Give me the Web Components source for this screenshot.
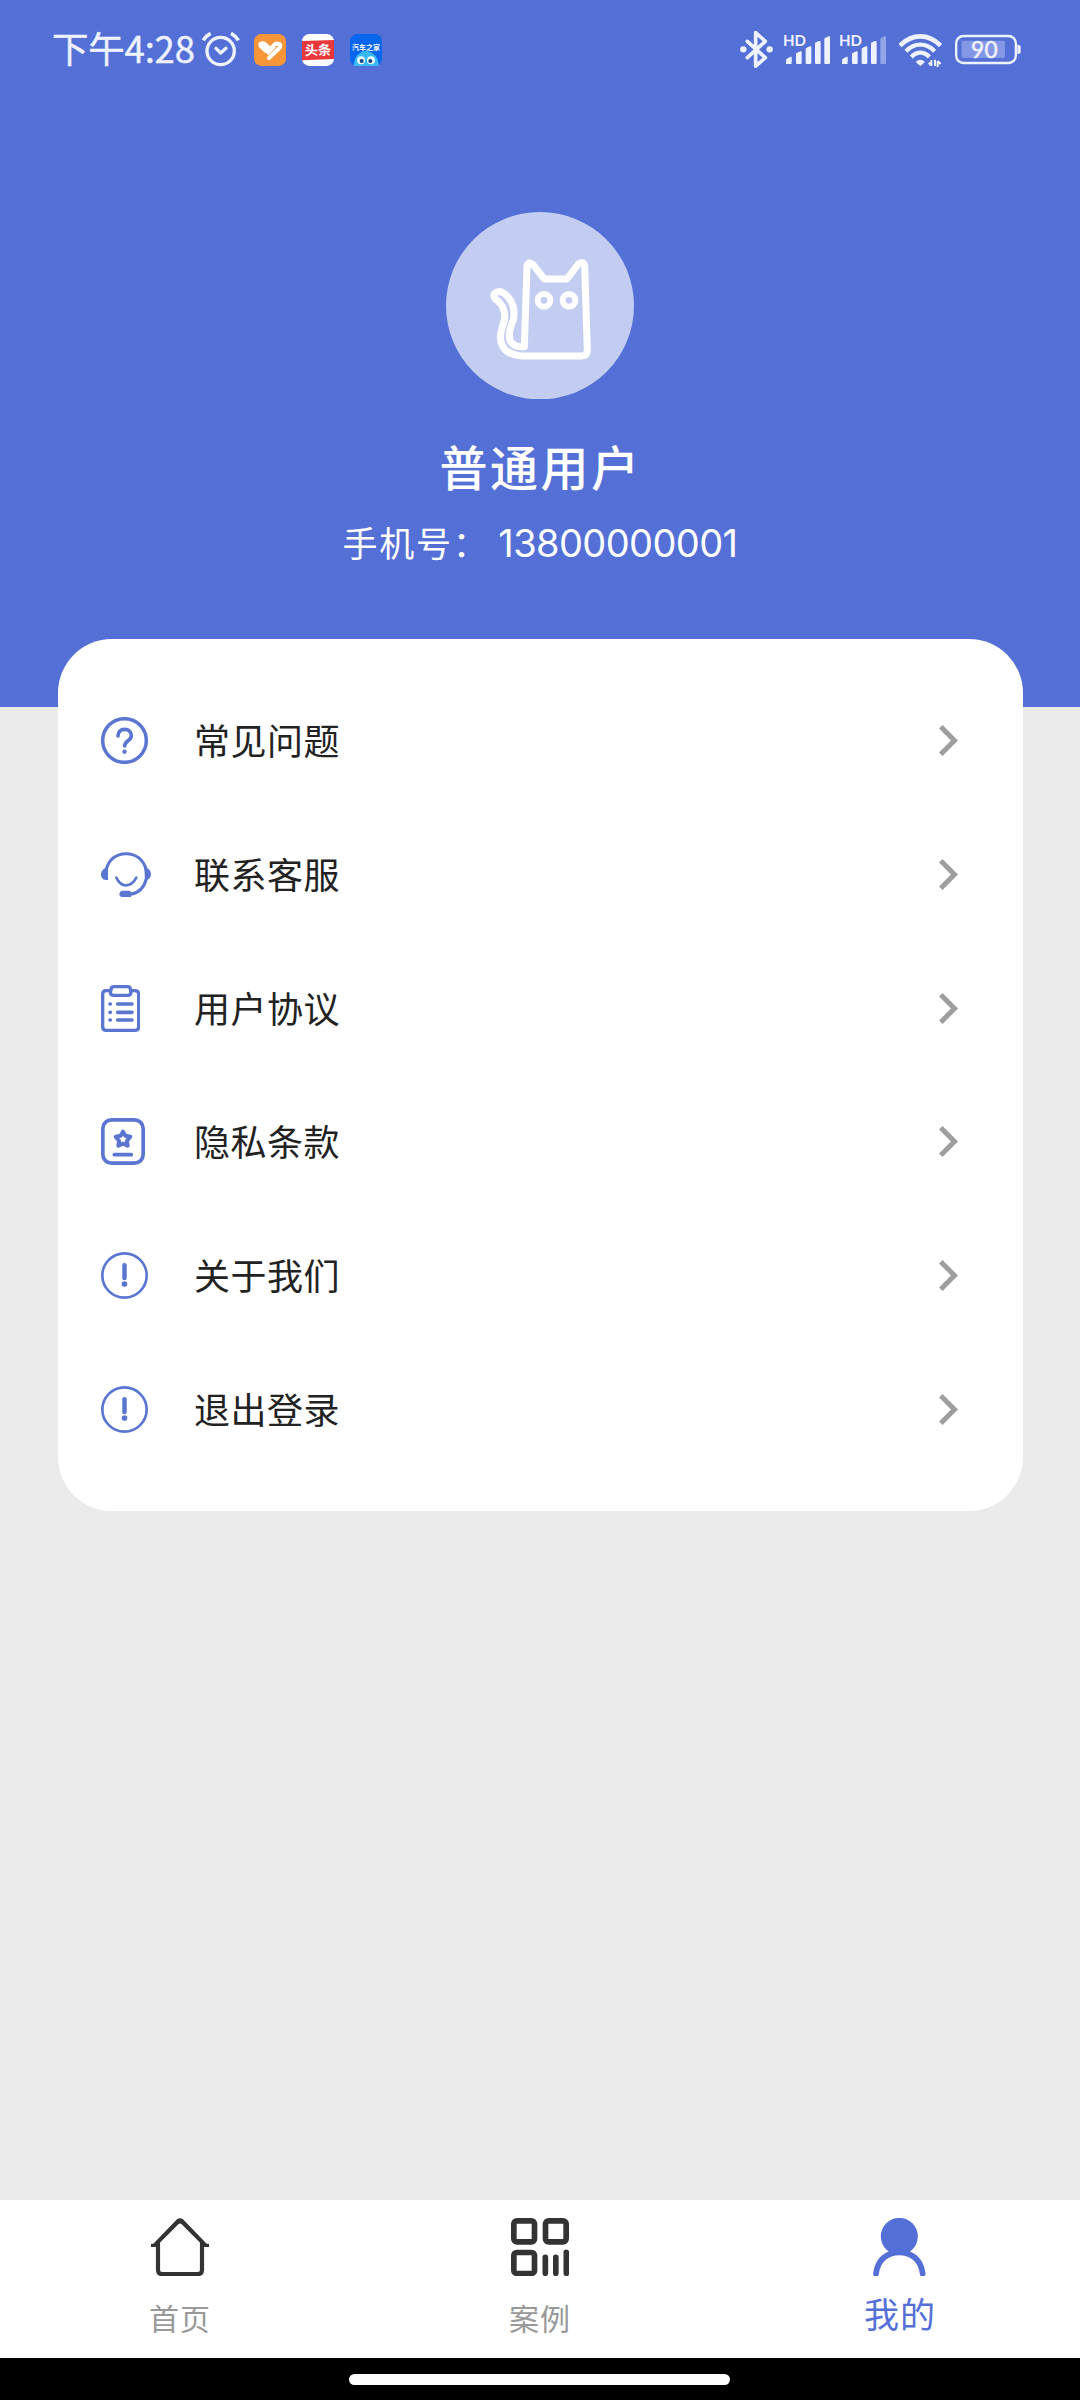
<!DOCTYPE html>
<html lang="zh-CN">
<head>
<meta charset="utf-8">
<title>我的</title>
<style>
html,body{margin:0;padding:0}
body{width:1080px;height:2400px;overflow:hidden;font-family:"Noto Sans CJK SC",sans-serif;background:#ebebeb}
</style>
</head>
<body>
<phone-screen>
  <profile-header slot="header" name="普通用户" label="手机号：" phone="13800000001"></profile-header>
  <menu-card>
    <menu-item icon="question">常见问题</menu-item>
    <menu-item icon="headset">联系客服</menu-item>
    <menu-item icon="clipboard">用户协议</menu-item>
    <menu-item icon="privacy">隐私条款</menu-item>
    <menu-item icon="about">关于我们</menu-item>
    <menu-item icon="about">退出登录</menu-item>
  </menu-card>
  <tab-bar slot="footer">
    <tab-item icon="home">首页</tab-item>
    <tab-item icon="cases">案例</tab-item>
    <tab-item icon="mine" active>我的</tab-item>
  </tab-bar>
</phone-screen>
<script>
const define = (name, render) => customElements.define(name, class extends HTMLElement {
  constructor() {
    super();
    this.attachShadow({ mode: 'open' });
  }
  connectedCallback() {
    this.shadowRoot.innerHTML = render(this);
  }
});

const svg = (x, y, w, h, body) =>
  `<svg viewBox="${x} ${y} ${w} ${h}" width="${w / 3}" height="${h / 3}" fill="none" stroke-linecap="round" stroke-linejoin="round">${body}</svg>`;

const MENU_ICONS = {
  question: svg(183, 291, 141, 141, `<circle cx="253.500" cy="361.500" r="65.500" stroke="#5b76d1" stroke-width="10.500"/>
    <path d="M234 348c0-12 8-20 20-20s20 8 20 19c0 16-20 15-20 31" stroke="#5b76d1" stroke-width="11"/><circle cx="253.500" cy="395" r="6.500" fill="#5b76d1"/>`),
  headset: svg(183, 695, 150, 136, `<path d="M198 750C205 718 228 700 258 700S311 718 319 750M319 775C312 804 293 819 271 822" stroke="#5b76d1" stroke-width="9"/>
    <path d="M204 741v38h-6c-9 0-15-7-15-17s6-15 12-18l4-5zM313 742l7 1c8 3 13 10 13 19s-5 14-13 18h-5z" fill="#5b76d1"/>
    <path d="M229 772c7 15 17 23 29 23s23-8 31-23" stroke="#5b76d1" stroke-width="8"/><path d="M246 811h22q5 0 5 5v14h-27q-8-1-8-9t8-10z" fill="#5b76d1"/>`),
  clipboard: svg(183, 195, 118, 141, `<path d="M211 212h-12q-11 0-11 11v97q0 11 11 11h86q11 0 11-11v-97q0-11-11-11h-12" stroke="#5b76d1" stroke-width="10"/>
    <path d="M214 206q0-6 7-6h42q7 0 8 6l2 11q0 9-10 9h-42q-10 0-10-9z" stroke="#5b76d1" stroke-width="10"/>
    <path d="M233 252h43M233 277h43M233 300h43M210 252h1M210 277h1M210 300h1" stroke="#5b76d1" stroke-width="11"/>`),
  privacy: svg(183, 594, 132, 141, `<rect x="188.500" y="599.500" width="121" height="130" rx="26" stroke="#5b76d1" stroke-width="11"/>
    <path d="M249 635l7 12 15 3-10 12 2 15-14-6-14 6 2-15-10-12 15-3z" stroke="#5b76d1" stroke-width="12"/><path d="M223 704h51" stroke="#5b76d1" stroke-width="11"/>`),
  about: svg(183, 156, 141, 141, `<circle cx="253.500" cy="226.500" r="66.500" stroke="#5b76d1" stroke-width="8"/>
    <path d="M253.500 196v38" stroke="#5b76d1" stroke-width="13.500"/><circle cx="253.500" cy="252" r="8.500" fill="#5b76d1"/>`)
};

const TAB_ICONS = {
  home: svg(123, 113, 174, 175, `<path d="M123 200v-10h7L201 117q9-7 18 0l71 73h7v10h-14L215 132q-5-5-10 0L137 200z" fill="#333"/><path d="M144 188v80q0 13 12 13h108q12 0 12-13v-80" stroke="#333" stroke-width="12.500"/>`),
  cases: svg(153, 113, 174, 175, `<g stroke="#333" stroke-width="17"><rect x="161.500" y="121.500" width="62" height="63" rx="9"/><rect x="256.500" y="121.500" width="62" height="63" rx="9"/><rect x="161.500" y="216.500" width="62" height="63" rx="9"/><path d="M256 231v48M287.500 231v48M319 216v63"/></g>`),
  mine: svg(153, 113, 174, 175, `<circle cx="238" cy="168" r="55.500" fill="#5470d6"/><path d="M168 280C173 238 201 216 238 216s65 22 70 64" stroke="#5470d6" stroke-width="17"/>`)
};

const STATUS = {
  alarm: svg(487, 0, 113, 210, `<circle cx="543" cy="108" r="41" stroke="#eef2ff" stroke-width="10"/><path d="M529 100l14 14 16-14" stroke="#eef2ff" stroke-width="10"/><path d="M491 76q8-14 22-21M596 76q-8-14-22-21" stroke="#eef2ff" stroke-width="11" stroke-linecap="butt"/>`),
  fit: svg(642, 0, 96, 210, `<rect x="642" y="57" width="96" height="96" rx="22" fill="#f79539"/><path d="M661 87q9-5 16 2l9 9M662 93l14 14q6 4 11-1l15-16q8-7 15-2" stroke="#fff" stroke-width="12"/><path d="M664 88l15 14" stroke="#fff" stroke-width="12"/><path d="M687 129l31-30q6-7 0-12" stroke="#fff" stroke-width="12"/><path d="M684 117l20-20" stroke="#fff" stroke-width="6"/>`),
  news: svg(786, 0, 96, 210, `<rect x="786" y="57" width="96" height="96" rx="22" fill="#fff"/><path d="M786 78l96-3v57l-96 4z" fill="#e9383c"/><text x="834" y="120" font-size="40" font-weight="700" text-anchor="middle" fill="#fff" transform="rotate(-1 834 105)">头条</text>`),
  auto: svg(930, 0, 96, 210, `<rect x="930" y="57" width="96" height="96" rx="22" fill="#0866ee"/><text x="978" y="105" font-size="21" font-weight="700" text-anchor="middle" fill="#fff">汽车之家</text><path d="M942 153q0-40 36-45 36 5 38 45z" fill="#39baf5"/><path d="M972 112l7-6 9 7z" fill="#39baf5"/><circle cx="963" cy="136" r="12" fill="#e5f9ff"/><circle cx="993" cy="136" r="12" fill="#e5f9ff"/><circle cx="965" cy="138" r="6" fill="#134075"/><circle cx="991" cy="138" r="6" fill="#134075"/>`),
  bluetooth: svg(60, 0, 99, 210, `<path d="M82 79l54 49-29 25V53l29 26-54 49" stroke="#eef2ff" stroke-width="11"/><circle cx="70" cy="103" r="9.500" fill="#eef2ff"/><circle cx="149" cy="103" r="9.500" fill="#eef2ff"/>`),
  signal: last => svg(192, 0, 138, 210, `<text x="189" y="93" font-family="Lato" font-size="46" font-weight="700" textLength="69" lengthAdjust="spacingAndGlyphs" fill="#eef2ff">HD</text><g fill="#eef2ff"><path d="M198 146v-10q0-3 3-5l11-6q3-1 3 3v16q0 3-3 3h-11q-3 0-3-1z"/><path d="M228 144v-27q0-3 3-4l10-4q4-1 4 3v32q0 3-3 3h-11q-3 0-3-3z"/><path d="M257 144v-42q0-3 3-4l10-4q4-1 4 3v47q0 3-3 3h-11q-3 0-3-3z"/><path d="M285 144V86q0-3 3-4l10-4q4-1 4 3v63q0 3-3 3h-11q-3 0-3-3z"/><path opacity="${last}" d="M313 144V72q0-3 3-4l10-4q4-1 4 3v77q0 3-3 3h-11q-3 0-3-3z"/></g>`),
  wifi: svg(536, 0, 128, 210, `<g stroke="#eef2ff" stroke-linecap="butt"><path d="M539 92q27-28 61-28t61 28" stroke-width="14"/><path d="M557 109q19-20 43-20t43 20" stroke-width="13"/><path d="M573 126q12-13 27-13t27 13" stroke-width="13"/></g><path d="M586 141q14-14 28 0l-14 12z" fill="#eef2ff"/><path d="M633 153v-18M633 152l-8-9M644 153v-19M652 156v-18M652 138l9 9" stroke="#eef2ff" stroke-width="6" stroke-linecap="butt"/>`),
  battery: svg(706, 0, 198, 210, `<rect x="709.500" y="63" width="179" height="81" rx="22" stroke="#eef2ff" stroke-width="7"/><rect x="726" y="77" width="130" height="52" rx="5" fill="#8397e6"/><path d="M893 89q10 0 10 7v14q0 7-10 7z" fill="#eef2ff"/><text x="794" y="128" font-family="Lato" font-size="68" font-weight="400" stroke="#eef2ff" stroke-width="1.500" textLength="80" text-anchor="middle" fill="#eef2ff">90</text>`)
};

define('status-bar', () => `<style>
  :host{display:flex;align-items:center;justify-content:space-between;height:100px;padding:0 59px 0 52px;box-sizing:border-box;color:#eef2ff}
  div{display:flex;align-items:center}
  svg{display:block;font-family:"Noto Sans CJK SC",sans-serif}
  time{font-size:36.500px;line-height:50px;width:150.300px;white-space:nowrap;letter-spacing:-.2px;padding-bottom:4px;-webkit-text-stroke:.4px #eef2ff}
  .apps{gap:16px;margin-left:14px}
  .right{gap:10.500px}
  .right svg:nth-child(n+4){margin-left:2.500px}
  </style><div><time>下午4:28</time>${STATUS.alarm}<div class="apps">${STATUS.fit}${STATUS.news}${STATUS.auto}</div></div>
  <div class="right">${STATUS.bluetooth}${STATUS.signal(1)}${STATUS.signal(.4)}${STATUS.wifi}${STATUS.battery}</div>`);

define('profile-header', el => `<style>
  :host{display:flex;flex-direction:column;height:707px;background:#5470d6;color:#fff}
  section{display:flex;flex-direction:column;align-items:center;padding-top:112px}
  svg{display:block}
  h1{margin:32px 0 0;font-size:48px;line-height:68px;font-weight:500;letter-spacing:2.500px;padding-left:1px}
  p{margin:17px 0 0;display:flex;align-items:center;font-size:35px;line-height:52px;letter-spacing:1.700px}
  span{padding-bottom:2px}
  b{font:400 38px/52px Inter,sans-serif;letter-spacing:-.6px;margin-left:9px}
  </style><status-bar></status-bar><section>
  ${svg(48, 36, 564, 562, `<ellipse cx="330" cy="317" rx="282" ry="281" fill="#c3cdf1"/>
    <path d="M283 440L291 197Q297 182 309 194L343 237H411L445 192Q459 182 464 197L472 450Q472 468 455 468H275Q213 464 211 410Q214 385 223 360Q228 325 205 304Q186 292 194 280Q211 266 235 292Q258 320 250 360Q232 400 241 423Q252 443 283 440" stroke="#fff" stroke-width="21"/>
    <circle cx="342" cy="301" r="19" stroke="#fff" stroke-width="18"/><circle cx="417" cy="301" r="19" stroke="#fff" stroke-width="18"/>`)}
  <h1>${el.getAttribute('name')}</h1><p><span>${el.getAttribute('label')}</span><b>${el.getAttribute('phone')}</b></p></section>`);

define('menu-card', () => `<style>
  :host{display:flex;flex-direction:column;box-sizing:border-box;margin:-68.400px 57.500px 0 57.600px;padding:35.200px 0 35px;background:#fff;border-radius:54px}
  </style><slot></slot>`);

define('menu-item', el => `<style>
  :host{display:flex;align-items:center;height:133.750px;padding:0 64.500px 0 43.300px;color:#222;font-size:36px;line-height:54px;letter-spacing:.5px}
  .icon{display:flex;width:93.200px}
  .label{flex:1;padding-bottom:3px}
  svg{display:block}
  </style><span class="icon">${MENU_ICONS[el.getAttribute('icon')]}</span><span class="label"><slot></slot></span>
  <svg width="19" height="31" viewBox="0 0 19 31" fill="none"><path d="M1.800 1.800L15.500 15.500 1.800 29.200" stroke="#9e9e9e" stroke-width="5"/></svg>`);

define('tab-bar', () => `<style>
  :host{display:flex;height:158px;background:#fff}
  </style><slot></slot>`);

define('tab-item', el => `<style>
  :host{flex:1;display:flex;flex-direction:column;align-items:center;padding-top:17.500px;color:#999;font-size:30px;letter-spacing:1px}
  :host([active]){color:#5470d6;font-size:35px}
  svg{display:block}
  span{line-height:50px;margin-top:16px}
  :host([active]) span{margin-top:12px}
  </style>${TAB_ICONS[el.getAttribute('icon')]}<span><slot></slot></span>`);

define('gesture-bar', () => `<style>
  :host{display:flex;justify-content:center;height:42px;background:#000}
  i{width:381px;height:10.500px;margin:16px 1px 0 0;border-radius:6px;background:#fff}
  </style><i></i>`);

define('phone-screen', () => `<style>
  :host{display:flex;flex-direction:column;width:1080px;height:2400px;background:#ebebeb}
  main{flex:1}
  </style><slot name="header"></slot><main><slot></slot></main><slot name="footer"></slot><gesture-bar></gesture-bar>`);
</script>
</body>
</html>
